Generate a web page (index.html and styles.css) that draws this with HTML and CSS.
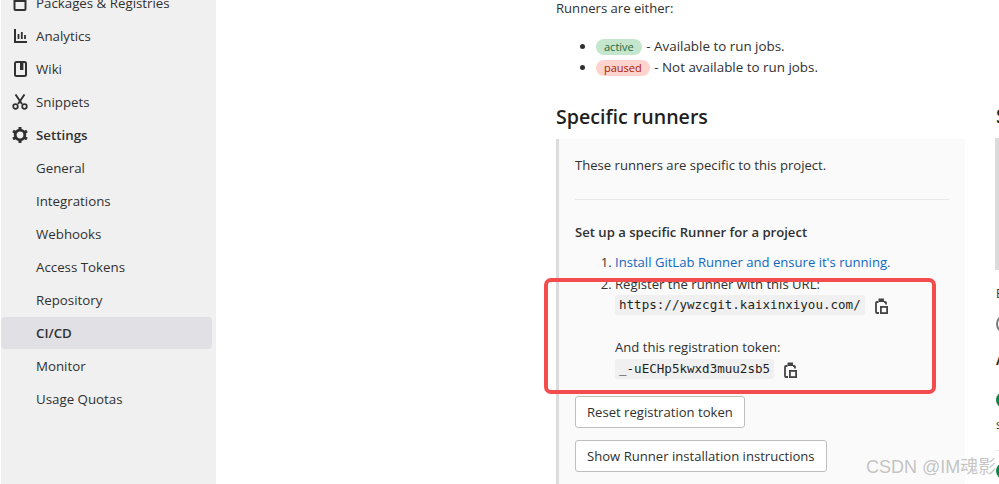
FILE: index.html
```html
<!DOCTYPE html>
<html lang="en">
<head>
    <meta charset="UTF-8">
    <meta name="viewport" content="width=device-width, initial-scale=1.0">
    <title>CI/CD Settings</title>
    <link rel="stylesheet" href="styles.css">
</head>
<body>
    <div class="layout">
        <nav class="sidebar">
            <a class="nav-item nav-first">
                <svg class="icon" viewBox="0 0 16 16"><path d="M2.500 1v13a1 1 0 0 0 1 1h9a1 1 0 0 0 1-1V1M2.500 6h11" fill="none" stroke="#303030" stroke-width="2"/></svg>
                Packages &amp; Registries
            </a>
            <a class="nav-item">
                <svg class="icon" viewBox="0 0 16 16"><path d="M3 1v13h12" fill="none" stroke="#303030" stroke-width="2"/><path d="M6.500 6v5M9.800 4v7M13 7v4" fill="none" stroke="#303030" stroke-width="1.800"/></svg>
                Analytics
            </a>
            <a class="nav-item">
                <svg class="icon" viewBox="0 0 16 16"><rect x="3" y="1" width="11" height="14" rx="1.500" fill="none" stroke="#303030" stroke-width="2"/><rect x="8" y="1" width="3.400" height="8" fill="#303030"/></svg>
                Wiki
            </a>
            <a class="nav-item">
                <svg class="icon" viewBox="0 0 16 16"><path d="M3.500 0.500l6.500 9.500M12.500 0.500l-6.500 9.500" fill="none" stroke="#303030" stroke-width="1.900"/><circle cx="3.500" cy="12.500" r="2.300" fill="none" stroke="#303030" stroke-width="1.700"/><circle cx="12.500" cy="12.500" r="2.300" fill="none" stroke="#303030" stroke-width="1.700"/></svg>
                Snippets
            </a>
            <a class="nav-item nav-parent">
                <svg class="icon" viewBox="0 0 16 16"><circle cx="8" cy="8" r="4.800" fill="none" stroke="#303030" stroke-width="2.800"/><path d="M8 0v3M8 13v3M1 4l2.600 1.500M12.400 10.500L15 12M1 12l2.600-1.500M12.400 5.500L15 4" fill="none" stroke="#303030" stroke-width="3"/></svg>
                Settings
            </a>
            <a class="nav-item nav-sub">General</a>
            <a class="nav-item nav-sub">Integrations</a>
            <a class="nav-item nav-sub">Webhooks</a>
            <a class="nav-item nav-sub">Access Tokens</a>
            <a class="nav-item nav-sub">Repository</a>
            <a class="nav-item nav-sub active">CI/CD</a>
            <a class="nav-item nav-sub">Monitor</a>
            <a class="nav-item nav-sub">Usage Quotas</a>
        </nav>

        <main class="content">
            <section class="col-left">
                <p class="intro">Runners are either:</p>
                <ul class="states">
                    <li><span class="badge badge-green">active</span> - Available to run jobs.</li>
                    <li><span class="badge badge-red">paused</span> - Not available to run jobs.</li>
                </ul>
                <h3 class="col-title">Specific runners</h3>
                <div class="panel">
                    <p class="panel-intro">These runners are specific to this project.</p>
                    <hr class="rule">
                    <h5 class="panel-title">Set up a specific Runner for a project</h5>
                    <ol class="steps">
                        <li><a class="link">Install GitLab Runner and ensure it's running.</a></li>
                        <li>
                            Register the runner with this URL:
                            <div class="copy-row">
                                <code>https://ywzcgit.kaixinxiyou.com/</code>
                                <svg class="clip" viewBox="0 0 13 16"><path d="M3.500 4H2a1 1 0 0 0-1 1v9a1 1 0 0 0 1 1h2M9 4h1a1 1 0 0 1 1 1v1.500" fill="none" stroke="#444" stroke-width="1.800"/><rect x="3.500" y="0.500" width="5.500" height="3.500" fill="#444"/><rect x="5.900" y="8.900" width="6.200" height="6.200" fill="none" stroke="#444" stroke-width="1.800"/></svg>
                            </div>
                            <div class="token-label">And this registration token:</div>
                            <div class="copy-row">
                                <code>_-uECHp5kwxd3muu2sb5</code>
                                <svg class="clip" viewBox="0 0 13 16"><path d="M3.500 4H2a1 1 0 0 0-1 1v9a1 1 0 0 0 1 1h2M9 4h1a1 1 0 0 1 1 1v1.500" fill="none" stroke="#444" stroke-width="1.800"/><rect x="3.500" y="0.500" width="5.500" height="3.500" fill="#444"/><rect x="5.900" y="8.900" width="6.200" height="6.200" fill="none" stroke="#444" stroke-width="1.800"/></svg>
                            </div>
                        </li>
                    </ol>
                    <button class="btn btn-reset">Reset registration token</button>
                    <button class="btn">Show Runner installation instructions</button>
                </div>
            </section>

            <section class="col-right">
                <h3 class="col-title">Shared runners</h3>
                <div class="panel-side"></div>
                <p class="side-line">Enable shared runners</p>
                <div class="toggle"></div>
                <h5 class="side-title">Available shared runners</h5>
                <div class="dot"></div>
                <p class="side-name">shared-runner</p>
                <hr class="side-rule">
                <div class="dot"></div>
            </section>
        </main>
    </div>

    <div class="highlight"></div>
    <div class="watermark">CSDN @IM魂影</div>
</body>
</html>
```

FILE: styles.css
```css
html, body {
    height: 100%;
}
body {
    margin: 0;
    overflow: hidden;
    background: #fff;
    font-family: "Open Sans", "Noto Sans", "Noto Sans CJK SC", sans-serif;
    font-size: 13.100px;
    color: #303030;
}
.layout {
    display: flex;
    height: 484px;
    overflow: hidden;
}

/* sidebar */
.sidebar {
    box-sizing: border-box;
    flex: 0 0 215px;
    height: 484px;
    margin-left: 1px;
    padding-right: 4px;
    background: #f0f0f0;
    font-size: 13.300px;
}
.nav-item {
    display: flex;
    align-items: center;
    height: 32px;
    margin-bottom: 1px;
    padding-left: 11px;
    border-radius: 4px;
}
.nav-first {
    margin-top: -13px;
}
.icon {
    flex: none;
    width: 16px;
    height: 16px;
    margin-right: 8px;
}
.nav-parent {
    font-weight: 600;
}
.nav-sub {
    padding-left: 35px;
}
.active {
    background: #e1e1e5;
    font-weight: 600;
}

/* main columns */
.content {
    display: flex;
    flex: none;
    gap: 31px;
    margin-left: 340px;
}
.col-left {
    flex: 0 0 409px;
}
.col-right {
    flex: 0 0 300px;
    padding-top: 77px;
}
.intro {
    margin: -2px 0 0;
    line-height: 20px;
}
.states {
    margin: 18px 0 0;
    padding-left: 40px;
    font-size: 13.400px;
}
.states li {
    height: 21px;
    line-height: 21px;
}
.badge {
    display: inline-block;
    height: 16px;
    padding: 0 8px;
    border-radius: 8px;
    font-size: 11px;
    line-height: 16px;
    vertical-align: 0;
    margin-right: 1px;
}
.badge-green {
    background: #c3e6cd;
    color: #24663b;
}
.badge-red {
    background: #fdd4cd;
    color: #ae1800;
}
.col-title {
    margin: 25px 0 8px;
    font-size: 19.600px;
    font-weight: 600;
    line-height: 28px;
    color: #1f1f1f;
}

/* runner panel */
.panel {
    box-sizing: border-box;
    height: 360px;
    padding: 17px 16px 0 16px;
    border-left: 3px solid #dbdbdb;
    background: #fafafa;
}
.panel-intro {
    margin: 0;
    line-height: 18px;
}
.rule {
    height: 1px;
    margin: 25px 0 23px;
    border: 0;
    background: #e8e8e8;
}
.panel-title {
    margin: 0 0 10px;
    font-size: 13.100px;
    font-weight: 600;
    line-height: 18px;
}
.steps {
    margin: 0;
    padding-left: 40px;
    line-height: 22px;
}
.link {
    color: #1068bf;
}
.copy-row {
    display: flex;
    align-items: center;
    height: 21px;
}
code {
    padding: 1px 4px;
    margin-right: 10px;
    margin-bottom: 2px;
    border-radius: 3px;
    background: #f0f0f0;
    font-family: "DejaVu Sans Mono", "Liberation Mono", monospace;
    font-size: 12.550px;
    line-height: 18px;
    color: #1f1f1f;
}
.clip {
    width: 13px;
    height: 16px;
}
.token-label {
    margin-top: 20px;
    margin-bottom: 1px;
}
.btn {
    display: block;
    height: 32px;
    padding: 0 11px;
    border: 1px solid #bfbfbf;
    border-radius: 3px;
    background: #fff;
    font-family: inherit;
    font-size: 13.100px;
    color: #303030;
}
.btn-reset {
    margin: 16px 0 12px;
}

/* shared runners column, cut off by the window */
.panel-side {
    height: 132px;
    margin-left: -1px;
    border-left: 4px solid #dbdbdb;
    background: #fafafa;
}
.side-line {
    margin: 15px 0 0;
    line-height: 18px;
    font-size: 12px;
}
.toggle {
    width: 20px;
    height: 20px;
    margin-top: 11px;
    box-sizing: border-box;
    border: 2px solid #777;
    border-radius: 50%;
}
.side-title {
    margin: 14px 0 0;
    font-size: 16px;
    font-weight: 600;
    line-height: 22px;
}
.dot {
    width: 16px;
    height: 16px;
    border-radius: 50%;
    background: #108548;
}
.col-right .dot {
    margin-top: 22px;
}
.side-name {
    margin: 8px 0 0;
    line-height: 18px;
    font-size: 12px;
}
.side-rule {
    height: 1px;
    margin: 16px 0 0;
    border: 0;
    background: #e8e8e8;
}
.col-right .side-rule + .dot {
    margin-top: 12px;
}

/* annotation on top of the screenshot */
.highlight {
    position: absolute;
    left: 544px;
    top: 278px;
    box-sizing: border-box;
    width: 392px;
    height: 116px;
    border: 4px solid #f44c4c;
    border-radius: 7px;
}
.watermark {
    position: absolute;
    left: 866px;
    top: 457px;
    font-family: "Liberation Sans", "Noto Sans CJK SC", sans-serif;
    font-size: 18px;
    line-height: 20px;
    color: rgba(140, 140, 140, 0.5);
    white-space: nowrap;
}
```
